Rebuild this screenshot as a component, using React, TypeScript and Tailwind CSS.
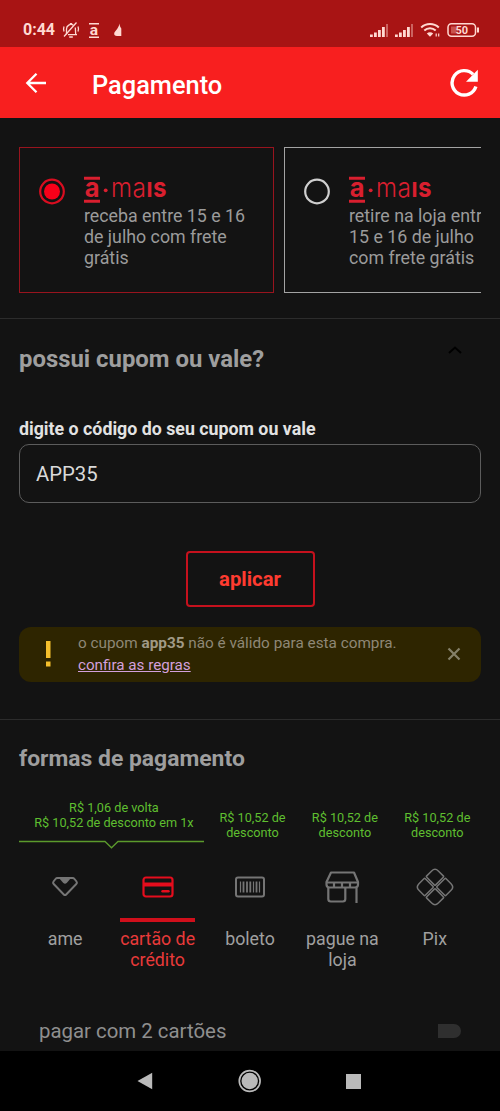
import type { ReactNode } from 'react'

interface PaymentMethod {
  id: string
  label: string[]
  icon: ReactNode
  discount?: string[]
  selected?: boolean
}

function StatusBar() {
  return (
    <div className="flex h-[47px] shrink-0 items-start justify-between bg-[#a81414] pl-[23px] pr-[20px] pt-[20px] text-[#ffd9d2]">
      <div className="flex h-5 items-center">
        <span className="w-[33px] whitespace-nowrap text-[16px] font-bold leading-5">0:44</span>
        <svg className="ml-[6px]" width="18" height="18" viewBox="0 0 18 18" fill="none" stroke="currentColor" strokeWidth="1.3">
          <path d="M4.500 13.500V8a4.500 4.500 0 0 1 6.800-3.900M13.300 6.500l.4 7M6 13.600h9M7.200 16h3.600" />
          <path d="M14.500 1.500 2 15.500M2 5.500c-.6 1.800-.6 3.400 0 5M16 5.500c.7 1.800.7 3.500 0 5M7.800 2.600h2.400" />
        </svg>
        <svg className="ml-[8px] overflow-visible" width="12" height="17" viewBox="0 0 12 17" fill="currentColor">
          <path d="M1 1h10v1.500H1zM1 14.500h10V16H1z" />
          <text x="1.800" y="12.500" fontSize="15.500" fontWeight="700" fontFamily="Roboto, sans-serif">a</text>
        </svg>
        <svg className="ml-[12px]" width="12" height="16" viewBox="0 0 12 16" fill="currentColor">
          <path d="M7.500 1.500c.3 2.500.9 3.500 1.800 5v7.500H5C3 14 2 13 2.200 11.500 2.500 9 6.500 7 7.500 1.500z" />
        </svg>
      </div>
      <div className="flex h-5 items-center">
        <SignalIcon />
        <SignalIcon />
        <svg width="21" height="16" viewBox="0 0 21 16" fill="none" stroke="currentColor" strokeWidth="2">
          <path d="M1.200 5.400c5-4.600 12.600-4.600 17.600 0M4.300 8.500c3.300-3 8.100-3 11.400 0" />
          <path d="M6.800 11.500c1.800-1.600 4.600-1.600 6.400 0L10 14.800z" fill="currentColor" stroke="none" />
          <path d="M16.200 14.500v-3M18.700 11.500v3" strokeWidth="1.200" />
        </svg>
        <svg className="ml-[6px]" width="33" height="16" viewBox="0 0 33 16">
          <rect x="1" y="1.700" width="27.500" height="12.600" rx="3.500" fill="none" stroke="currentColor" strokeWidth="1.500" />
          <path d="M30 5.500h2v5h-2z" fill="currentColor" />
          <path d="M4 4.500h5v7H4z" fill="#c9524c" />
          <text x="14.700" y="12" textAnchor="middle" fontSize="11" fontWeight="700" fontFamily="Roboto, sans-serif" fill="currentColor">50</text>
        </svg>
      </div>
    </div>
  )
}

function SignalIcon() {
  return (
    <svg className="mr-[6px]" width="19" height="15" viewBox="0 0 19 15" fill="currentColor">
      <path d="M0 11.500h2.800V14H0zM4 9.500h2.800V14H4zM8 7h2.800v7H8zM12 4h2.800v10H12z" />
      <path d="M16 1h2v13h-2z" opacity=".4" />
    </svg>
  )
}

function Header() {
  return (
    <header className="flex h-[71px] shrink-0 items-center bg-[#f81f1f] pl-[24px] pr-[21px] text-white">
      <svg width="24" height="24" viewBox="0 0 24 24" fill="none" stroke="currentColor" strokeWidth="2.300">
        <path d="M22 12H3.500M12.500 2.800 3.300 12l9.200 9.200" />
      </svg>
      <h1 className="ml-[44px] mt-[4px] flex-1 text-[25.4px] font-medium leading-8">Pagamento</h1>
      <svg width="30" height="30" viewBox="0 0 30 30" fill="none">
        <path d="M26.900 18.500A12.200 12.200 0 1 1 24.100 6.400" stroke="currentColor" strokeWidth="3.400" />
        <path d="M28.800 1.800v12H17z" fill="currentColor" />
      </svg>
    </header>
  )
}

function AMaisLogo() {
  return (
    <svg className="block overflow-visible" width="84" height="28" viewBox="0 0 84 28" fill="#d91f2f">
      <path d="M0 .8h16v3H0zM0 23.800h16v3H0z" />
      <circle cx="21.700" cy="14.300" r="1.900" />
      <g fontFamily="Inter, sans-serif" fontSize="27.500">
        <text x=".8" y="21" fontWeight="700" textLength="14.800" lengthAdjust="spacingAndGlyphs">a</text>
        <text x="27" y="21" fontWeight="300" textLength="21" lengthAdjust="spacingAndGlyphs">m</text>
        <text x="48.500" y="21" fontWeight="300" textLength="13.500" lengthAdjust="spacingAndGlyphs">a</text>
        <text x="62.500" y="21" fontWeight="700" textLength="6" lengthAdjust="spacingAndGlyphs">ı</text>
        <text x="69" y="21" fontWeight="700" textLength="13.500" lengthAdjust="spacingAndGlyphs">s</text>
      </g>
    </svg>
  )
}

function DeliveryOption({ lines, selected }: { lines: string[]; selected?: boolean }) {
  return (
    <div
      className={
        selected
          ? 'flex h-[146px] w-[255px] shrink-0 border border-[#98141e] pl-[19px] pt-[28px]'
          : 'flex h-[146px] w-[255px] shrink-0 border border-[#a3a3a3] pl-[19px] pt-[28px]'
      }
    >
      <svg className="mt-[2px] shrink-0" width="27" height="27" viewBox="0 0 27 27" fill="none">
        <circle cx="13" cy="13.500" r="11.800" stroke={selected ? '#d90d20' : '#cfcfcf'} strokeWidth="2.200" />
        {selected && <circle cx="13" cy="13.500" r="8" fill="#f80019" />}
      </svg>
      <div className="ml-[18px]">
        <AMaisLogo />
        <p className="mt-[1px] whitespace-nowrap text-[17.8px] leading-[21px] text-[#9b9b9b]">
          {lines.map((line) => (
            <span key={line} className="block">{line}</span>
          ))}
        </p>
      </div>
    </div>
  )
}

function CouponSection() {
  return (
    <section className="flex h-[401px] shrink-0 flex-col border-t border-[#2c2c2c] px-[19px]">
      <div className="mt-[24px] flex items-start justify-between">
        <h2 className="text-[23.900px] font-bold leading-[32px] text-[#9e9e9e]">possui cupom ou vale?</h2>
        <svg className="mr-[18px] mt-[2px]" width="16" height="10" viewBox="0 0 16 10" fill="none" stroke="#000" strokeWidth="2">
          <path d="M2 8l6-5.500L14 8" />
        </svg>
      </div>
      <label htmlFor="coupon" className="mt-[42px] text-[17.8px] font-bold leading-[24px] text-[#e2e2e2]">
        digite o código do seu cupom ou vale
      </label>
      <input
        id="coupon"
        defaultValue="APP35"
        className="mt-[3px] h-[59px] w-full rounded-[10px] border border-[#5c5c5c] bg-transparent pl-[16px] text-[20.300px] text-[#dadada] outline-none"
      />
      <button className="mt-[48px] h-[56px] w-[129px] self-center rounded-[4px] border-2 border-[#c5111d] text-[20.300px] font-bold text-[#ff3b30]">
        aplicar
      </button>
      <div className="mt-[20px] flex h-[55px] items-center rounded-[12px] bg-[#2e2500] pb-[2px] pr-[19px]">
        <svg className="ml-[25px]" width="8" height="28" viewBox="0 0 8 28" fill="#f4bf2c">
          <path d="M2 1h4.500v17H2zM2 21.500h4.500v5H2z" />
        </svg>
        <div className="ml-[26px] flex-1 leading-[22px]">
          <p className="whitespace-nowrap text-[15.300px] text-[#8e8876]">
            o cupom <b className="text-[#a09a86]">app35</b> não é válido para esta compra.
          </p>
          <a className="block text-[15.200px] text-[#d3a0dd] underline">confira as regras</a>
        </div>
        <svg width="16" height="16" viewBox="0 0 16 16" fill="none" stroke="#858068" strokeWidth="2.200">
          <path d="M2.500 2.500l11 11M13.500 2.500l-11 11" />
        </svg>
      </div>
    </section>
  )
}

const methods: PaymentMethod[] = [
  {
    id: 'ame',
    label: ['ame'],
    icon: (
      <svg width="28" height="22" viewBox="0 0 28 22">
        <path d="M6.500 2h15q1.200 0 2 1l2 2.500q1 1.300-.2 2.500L15.200 18.500q-1.200 1.200-2.400 0L2.700 8q-1.200-1.200-.2-2.500L4.500 3q.8-1 2-1z" fill="none" stroke="#757575" strokeWidth="2" />
        <path d="M8 2h12l-4.300 5q-1.700 1.600-3.400 0z" fill="#757575" />
      </svg>
    ),
  },
  {
    id: 'cartao',
    label: ['cartão de', 'crédito'],
    selected: true,
    icon: (
      <svg width="32" height="22" viewBox="0 0 32 22" fill="none" stroke="#e50d1d">
        <rect x="1.500" y="1.500" width="29" height="19" rx="2.500" strokeWidth="2.200" />
        <path d="M1.500 8.500h29" strokeWidth="4" />
        <path d="M20.500 15.300h6" strokeWidth="2.400" strokeLinecap="round" />
      </svg>
    ),
  },
  {
    id: 'boleto',
    label: ['boleto'],
    discount: ['R$ 10,52 de', 'desconto'],
    icon: (
      <svg width="32" height="22" viewBox="0 0 32 22" fill="none" stroke="#757575">
        <rect x="2" y="1.500" width="28" height="19" rx="2" strokeWidth="2" />
        <path d="M6.500 5.500v11M19.500 5.500v11M25.500 5.500v11" strokeWidth="1.200" />
        <path d="M9.500 5.500v11M13 5.500v11M16.300 5.500v11M22.500 5.500v11" strokeWidth="1.800" />
      </svg>
    ),
  },
  {
    id: 'loja',
    label: ['pague na', 'loja'],
    discount: ['R$ 10,52 de', 'desconto'],
    icon: (
      <svg width="36" height="34" viewBox="0 0 36 34" fill="none" stroke="#757575" strokeWidth="2.200">
        <path d="M7 2.500h23l4 9.500v2.500q0 3-3 3H5.500q-3 0-3-3V12z" strokeLinejoin="round" />
        <path d="M2.500 12.500h31.500M10 12.500v5M18 12.500v5M26 12.500v5M4.300 17.500V29q0 2.500 2.500 2.500h12q2.500 0 2.500-2.500V17.500M32.500 17.500V33" />
      </svg>
    ),
  },
  {
    id: 'pix',
    label: ['Pix'],
    discount: ['R$ 10,52 de', 'desconto'],
    icon: (
      <svg width="38" height="38" viewBox="0 0 38 38" fill="none" stroke="#757575" strokeWidth="1.500">
        <g transform="rotate(45 19 19)">
          <path d="M10 5.300h7q1 0 1 1V17q0 1-1 1H6.300q-1 0-1-1v-7q0-4.700 4.700-4.700z" />
          <path d="M28 5.300h-7q-1 0-1 1V17q0 1 1 1h10.700q1 0 1-1v-7q0-4.700-4.700-4.700z" />
          <path d="M10 32.700h7q1 0 1-1V21q0-1-1-1H6.300q-1 0-1 1v7q0 4.700 4.700 4.700z" />
          <path d="M28 32.700h-7q-1 0-1-1V21q0-1 1-1h10.700q1 0 1 1v7q0 4.700-4.700 4.700z" />
        </g>
      </svg>
    ),
  },
]

function PaymentTab({ method }: { method: PaymentMethod }) {
  return (
    <button className="flex flex-col items-center">
      <span className="flex h-[40px] items-center justify-center">{method.icon}</span>
      <span className={method.selected ? 'mt-[11px] h-[4px] w-[75px] bg-[#d00f1b]' : 'mt-[11px] h-[4px] w-[75px]'} />
      <span
        className={
          method.selected
            ? 'mt-[6px] text-[17.8px] leading-[21px] text-[#e83a3a]'
            : 'mt-[6px] text-[17.8px] leading-[21px] text-[#a0a0a0]'
        }
      >
        {method.label.map((line) => (
          <span key={line} className="block whitespace-nowrap">{line}</span>
        ))}
      </span>
    </button>
  )
}

function PaymentSection() {
  return (
    <section className="flex h-[332px] shrink-0 flex-col border-t border-[#2c2c2c] px-[19px]">
      <h2 className="mt-[23px] text-[22.900px] font-bold leading-[32px] text-[#9e9e9e]">formas de pagamento</h2>

      {/* Discounts above the tabs, the first one spans ame and card */}
      <div className="mt-[25px] grid h-[49px] grid-cols-5 text-center text-[12.700px] leading-[15px] text-[#5fbf30]">
        <div className="col-span-2">
          <p className="ml-[5px]">R$ 1,06 de volta</p>
          <p className="ml-[5px]">R$ 10,52 de desconto em 1x</p>
          <svg className="mt-[10px] block" width="185" height="9" viewBox="0 0 185 9" fill="none" stroke="#5b9a2c" strokeWidth="1.300">
            <path d="M0 1.500h86l6.500 6.300L99 1.500h86" />
          </svg>
        </div>
        {methods.slice(2).map((method) => (
          <div key={method.id} className="pl-[5px] pt-[10px]">
            {method.discount?.map((line) => <p key={line}>{line}</p>)}
          </div>
        ))}
      </div>

      <div className="mt-[18px] grid grid-cols-5 items-start">
        {methods.map((method) => (
          <PaymentTab key={method.id} method={method} />
        ))}
      </div>

      <div className="mt-[47px] flex items-center justify-between pl-[20px] pr-[20px]">
        <span className="text-[20.400px] leading-[28px] text-[#8f8f8f]">pagar com 2 cartões</span>
        <span className="h-[14px] w-[23px] rounded-r-full bg-[#2f2f2f]" />
      </div>
    </section>
  )
}

function NavigationBar() {
  return (
    <nav className="flex h-[60px] shrink-0 items-center bg-black pl-[137px]">
      <svg width="16" height="18" viewBox="0 0 16 18" fill="#bababa">
        <path d="M15.200.8v16.400L.5 9z" />
      </svg>
      <svg className="ml-[85px]" width="24" height="24" viewBox="0 0 24 24" fill="none">
        <circle cx="11.700" cy="12" r="10.400" stroke="#bababa" strokeWidth="1.700" />
        <circle cx="11.700" cy="12" r="8.200" fill="#bababa" />
      </svg>
      <span className="ml-[84px] h-[15px] w-[15px] bg-[#bababa]" />
    </nav>
  )
}

export default function App() {
  return (
    <div className="flex h-[1111px] w-[500px] flex-col overflow-hidden bg-[#131313] font-['Roboto',sans-serif]">
      <StatusBar />
      <Header />
      <section className="h-[200px] shrink-0 px-[19px] pt-[29px]">
        <div className="flex gap-[10px] overflow-hidden">
          <DeliveryOption selected lines={['receba entre 15 e 16', 'de julho com frete', 'grátis']} />
          <DeliveryOption lines={['retire na loja entre', '15 e 16 de julho', 'com frete grátis']} />
        </div>
      </section>
      <CouponSection />
      <PaymentSection />
      <NavigationBar />
    </div>
  )
}
